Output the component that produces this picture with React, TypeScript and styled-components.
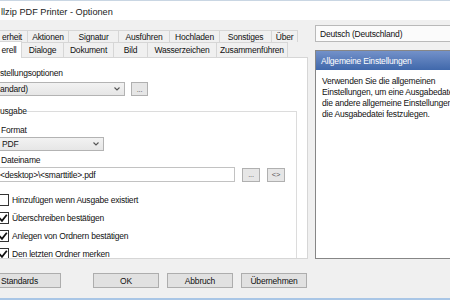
import React from 'react';
import styled, { createGlobalStyle, css } from 'styled-components';

const GlobalStyle = createGlobalStyle`
  html, body { margin: 0; padding: 0; background: #f0f0f0; }
  #root { width: 450px; height: 300px; }
`;

const Window = styled.div`
  width: 450px;
  height: 300px;
  box-sizing: border-box;
  overflow: hidden;
  background: #f0f0f0;
  border-bottom: 2px solid #a9c6e6;
  display: flex;
  flex-direction: column;
  font-family: "Liberation Sans", Arial, sans-serif;
  font-size: 8.5px;
  letter-spacing: -0.2px;
  color: #111;
`;

const TitleBar = styled.div`
  height: 20px;
  flex: none;
  box-sizing: border-box;
  background: #fff;
  border-top: 1px solid #c9d6e3;
  display: flex;
  align-items: center;
  padding: 2px 0 0 1px;
  font-size: 9.2px;
  letter-spacing: 0;
  color: #222;
  white-space: nowrap;
`;

const Body = styled.div`
  flex: 1;
  min-height: 0;
  display: flex;
  gap: 7px;
  margin-left: -4px;
`;

const LeftCol = styled.div`
  width: 312px;
  flex: none;
  display: flex;
  flex-direction: column;
  padding-top: 10px;
`;

const RightCol = styled.div`
  width: 180px;
  flex: none;
  display: flex;
  flex-direction: column;
  gap: 8px;
  padding-top: 5px;
`;

const TabRow = styled.div<{ $h: number }>`
  display: flex;
  align-items: flex-end;
  height: ${p => p.$h}px;
  flex: none;
`;

const Tab = styled.div<{ $w: number; $active?: boolean }>`
  width: ${p => p.$w}px;
  height: 100%;
  flex: none;
  box-sizing: border-box;
  margin-left: -1px;
  &:first-child { margin-left: 0; }
  border: 1px solid #d6d6d6;
  border-bottom: none;
  background: #f0f0f0;
  display: flex;
  align-items: center;
  justify-content: center;
  white-space: nowrap;
  line-height: 10px;
  ${p => p.$active && css`
    height: calc(100% + 2px);
    margin-bottom: -1px;
    background: #fff;
    position: relative;
    z-index: 1;
  `}
`;

const TabPanel = styled.div`
  height: 202px;
  flex: none;
  box-sizing: border-box;
  border: 1px solid #d6d6d6;
  background: #fff;
  padding: 10px 0 0 3px;
  overflow: hidden;
  display: flex;
  flex-direction: column;
  align-items: flex-start;
`;

const Label = styled.div<{ $mt?: number; $ml?: number }>`
  height: 11px;
  line-height: 11px;
  white-space: nowrap;
  margin-top: ${p => p.$mt ?? 0}px;
  margin-left: ${p => p.$ml ?? 0}px;
`;

const FieldRow = styled.div<{ $mt: number }>`
  display: flex;
  align-items: center;
  margin-top: ${p => p.$mt}px;
`;

const Combo = styled.div<{ $w: number; $h: number; $pad: number; $bg?: string }>`
  width: ${p => p.$w}px;
  height: ${p => p.$h}px;
  box-sizing: border-box;
  margin-left: -6px;
  border: 1px solid #b3b3b3;
  background: ${p => p.$bg ?? 'linear-gradient(#f2f2f2, #e6e6e6)'};
  display: flex;
  align-items: center;
  justify-content: space-between;
  padding: 0 4px 0 ${p => p.$pad}px;
  white-space: nowrap;
  flex: none;
`;

const TextField = styled.div<{ $w: number }>`
  width: ${p => p.$w}px;
  height: 15px;
  box-sizing: border-box;
  margin-left: -6px;
  border: 1px solid #c2c2c2;
  background: #fff;
  display: flex;
  align-items: center;
  padding-left: 5px;
  white-space: nowrap;
  flex: none;
`;

const SmallButton = styled.div<{ $w: number; $h: number; $ml: number }>`
  width: ${p => p.$w}px;
  height: ${p => p.$h}px;
  box-sizing: border-box;
  margin-left: ${p => p.$ml}px;
  border: 1px solid #b0b0b0;
  background: #e6e6e6;
  display: flex;
  align-items: center;
  justify-content: center;
  font-size: 7.5px;
  color: #555;
  flex: none;
`;

const Group = styled.fieldset`
  margin: 10px 0 0 -6px;
  width: 303px;
  box-sizing: border-box;
  border: 1px solid #dcdcdc;
  padding: 0 0 0 5px;
  min-inline-size: 0;
  display: flex;
  flex-direction: column;
  align-items: flex-start;
  flex: none;
`;

const Legend = styled.legend`
  padding: 0;
  line-height: 11px;
  height: 11px;
`;

const CheckRow = styled.div<{ $mt: number }>`
  display: flex;
  align-items: center;
  gap: 3px;
  height: 13px;
  margin-top: ${p => p.$mt}px;
  white-space: nowrap;
`;

const CheckBox = styled.div`
  width: 12px;
  height: 12px;
  box-sizing: border-box;
  margin-left: -3px;
  border: 1px solid #333;
  background: #fff;
  display: flex;
  align-items: center;
  justify-content: center;
  flex: none;
`;

const ButtonRow = styled.div`
  display: flex;
  align-items: center;
  justify-content: flex-end;
  gap: 8px;
  width: 311px;
  height: 15px;
  margin-top: 14px;
  flex: none;
`;

const DialogButton = styled.div<{ $w: number; $left?: boolean }>`
  width: ${p => p.$w}px;
  height: 15px;
  box-sizing: border-box;
  border: 1px solid #adadad;
  background: #e1e1e1;
  display: flex;
  align-items: center;
  justify-content: ${p => (p.$left ? 'flex-start' : 'center')};
  padding-left: ${p => (p.$left ? 6 : 0)}px;
  white-space: nowrap;
  flex: none;
  ${p => p.$left && css`margin-left: -2px; margin-right: auto;`}
`;

const LangSelect = styled.div`
  height: 17px;
  box-sizing: border-box;
  border: 1px solid #b9b9b9;
  background: #fbfbfb;
  display: flex;
  align-items: center;
  padding-left: 4px;
  white-space: nowrap;
  flex: none;
`;

const InfoPanel = styled.div`
  height: 209px;
  box-sizing: border-box;
  border: 1px solid #868686;
  background: #fff;
  display: flex;
  flex-direction: column;
  flex: none;
`;

const InfoHeader = styled.div`
  height: 19px;
  flex: none;
  background: linear-gradient(#7391c9, #4068ab);
  color: #fff;
  display: flex;
  align-items: center;
  padding-left: 5px;
  white-space: nowrap;
`;

const InfoText = styled.div`
  padding: 6px 0 0 6px;
  line-height: 11px;
  white-space: nowrap;
`;

const Chevron = () => (
  <svg width="6" height="4" viewBox="0 0 6 4">
    <polyline points="0.5,0.5 3,3 5.5,0.5" fill="none" stroke="#555" strokeWidth="1.1" />
  </svg>
);

const Check = () => (
  <svg width="10" height="10" viewBox="0 0 10 10">
    <polyline points="1.5,5 4,7.8 8.8,1.8" fill="none" stroke="#111" strokeWidth="1.8" />
  </svg>
);

const row1 = [
  { t: 'erheit', w: 32 },
  { t: 'Aktionen', w: 42 },
  { t: 'Signatur', w: 51 },
  { t: 'Ausführen', w: 52 },
  { t: 'Hochladen', w: 51 },
  { t: 'Sonstiges', w: 53 },
  { t: 'Über', w: 27 },
];

const row2 = [
  { t: 'erell', w: 26, active: true },
  { t: 'Dialoge', w: 43 },
  { t: 'Dokument', w: 51 },
  { t: 'Bild', w: 35 },
  { t: 'Wasserzeichen', w: 70 },
  { t: 'Zusammenführen', w: 72 },
];

const checks = [
  { t: 'Hinzufügen wenn Ausgabe existiert', on: false },
  { t: 'Überschreiben bestätigen', on: true },
  { t: 'Anlegen von Ordnern bestätigen', on: true },
  { t: 'Den letzten Ordner merken', on: true },
];

export default function App() {
  return (
    <Window>
      <GlobalStyle />
      <TitleBar>llzip PDF Printer - Optionen</TitleBar>
      <Body>
        <LeftCol>
          <TabRow $h={12}>
            {row1.map(t => (
              <Tab key={t.t} $w={t.w}>{t.t}</Tab>
            ))}
          </TabRow>
          <TabRow $h={15}>
            {row2.map(t => (
              <Tab key={t.t} $w={t.w} $active={t.active}>{t.t}</Tab>
            ))}
          </TabRow>
          <TabPanel>
            <Label>stellungsoptionen</Label>
            <FieldRow $mt={3}>
              <Combo $w={131} $h={14} $pad={5}>
                <span>andard)</span>
                <Chevron />
              </Combo>
              <SmallButton $w={17} $h={14} $ml={6}>...</SmallButton>
            </FieldRow>
            <Group>
              <Legend>usgabe</Legend>
              <Label $mt={8} $ml={1}>Format</Label>
              <FieldRow $mt={1}>
                <Combo $w={110} $h={14} $pad={7}>
                  <span>PDF</span>
                  <Chevron />
                </Combo>
              </FieldRow>
              <Label $mt={4} $ml={1}>Dateiname</Label>
              <FieldRow $mt={1}>
                <TextField $w={241}>&lt;desktop&gt;\&lt;smarttitle&gt;.pdf</TextField>
                <SmallButton $w={18} $h={14} $ml={7}>...</SmallButton>
                <SmallButton $w={18} $h={14} $ml={7}>&lt;&gt;</SmallButton>
              </FieldRow>
              {checks.map((c, i) => (
                <CheckRow key={c.t} $mt={i === 0 ? 11 : 5}>
                  <CheckBox>{c.on && <Check />}</CheckBox>
                  <span>{c.t}</span>
                </CheckRow>
              ))}
            </Group>
          </TabPanel>
          <ButtonRow>
            <DialogButton $w={67} $left>Standards</DialogButton>
            <DialogButton $w={66}>OK</DialogButton>
            <DialogButton $w={66}>Abbruch</DialogButton>
            <DialogButton $w={66}>Übernehmen</DialogButton>
          </ButtonRow>
        </LeftCol>
        <RightCol>
          <LangSelect>Deutsch (Deutschland)</LangSelect>
          <InfoPanel>
            <InfoHeader>Allgemeine Einstellungen</InfoHeader>
            <InfoText>
              Verwenden Sie die allgemeinen<br />
              Einstellungen, um eine Ausgabedatei<br />
              die andere allgemeine Einstellungen<br />
              die Ausgabedatei festzulegen.
            </InfoText>
          </InfoPanel>
        </RightCol>
      </Body>
    </Window>
  );
}
